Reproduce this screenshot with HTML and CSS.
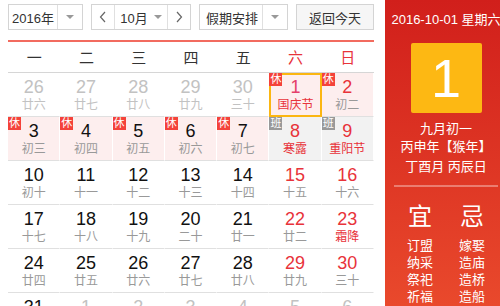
FILE: index.html
```html
<!DOCTYPE html>
<html lang="zh-CN">
<head>
    <meta charset="UTF-8">
    <meta name="viewport" content="width=device-width, initial-scale=1.0">
    <title>万年历</title>
    <link rel="stylesheet" href="styles.css">
</head>
<body>
    <div class="wrap">
        <div class="main">
            <div class="toolbar">
                <div class="select year">
                    <span class="val">2016年</span>
                    <span class="arrow"><i class="caret"></i></span>
                </div>
                <div class="select month">
                    <span class="nav"><svg width="8" height="12" viewBox="0 0 8 12"><polyline points="6,1 1.5,6 6,11" fill="none" stroke="#666" stroke-width="1.2"/></svg></span>
                    <span class="val">10月 <i class="caret"></i></span>
                    <span class="nav"><svg width="8" height="12" viewBox="0 0 8 12"><polyline points="2,1 6.5,6 2,11" fill="none" stroke="#666" stroke-width="1.2"/></svg></span>
                </div>
                <div class="select holiday">
                    <span class="val">假期安排</span>
                    <span class="arrow"><i class="caret"></i></span>
                </div>
                <button class="today-btn" type="button">返回今天</button>
            </div>

            <div class="weekdays">
                <span>一</span><span>二</span><span>三</span><span>四</span><span>五</span><span class="red">六</span><span class="red">日</span>
            </div>

            <div class="days" id="days"></div>
        </div>

        <div class="side">
            <div class="side-date">2016-10-01 星期六</div>
            <div class="big-day">1</div>
            <div class="lunar">
                <p>九月初一</p>
                <p>丙申年【猴年】</p>
                <p class="gz">丁酉月 丙辰日</p>
            </div>
            <div class="yiji">
                <div class="col">
                    <h3>宜</h3>
                    <p>订盟</p><p>纳采</p><p>祭祀</p><p>祈福</p><p>安香</p>
                </div>
                <div class="col">
                    <h3>忌</h3>
                    <p>嫁娶</p><p>造庙</p><p>造桥</p><p>造船</p><p>作灶</p>
                </div>
            </div>
        </div>
    </div>

    <script>
        // [day, lunar, flags]  o = other month, r = red number, f = festival, h = 休, b = 班, t = today
        const cells = [
            [26, '廿六', 'o'], [27, '廿七', 'o'], [28, '廿八', 'o'], [29, '廿九', 'o'], [30, '三十', 'o'], [1, '国庆节', 'rfht'], [2, '初二', 'rh'],
            [3, '初三', 'h'], [4, '初四', 'h'], [5, '初五', 'h'], [6, '初六', 'h'], [7, '初七', 'h'], [8, '寒露', 'rfb'], [9, '重阳节', 'rfb'],
            [10, '初十', ''], [11, '十一', ''], [12, '十二', ''], [13, '十三', ''], [14, '十四', ''], [15, '十五', 'r'], [16, '十六', 'r'],
            [17, '十七', ''], [18, '十八', ''], [19, '十九', ''], [20, '二十', ''], [21, '廿一', ''], [22, '廿二', 'r'], [23, '霜降', 'rf'],
            [24, '廿四', ''], [25, '廿五', ''], [26, '廿六', ''], [27, '廿七', ''], [28, '廿八', ''], [29, '廿九', 'r'], [30, '三十', 'r'],
            [31, '初一', ''], [1, '初二', 'o'], [2, '初三', 'o'], [3, '初四', 'o'], [4, '初五', 'o'], [5, '初六', 'o'], [6, '初七', 'o']
        ];

        const days = document.getElementById('days');

        cells.forEach(([num, lunar, flags]) => {
            const cell = document.createElement('div');
            cell.className = 'day';
            if (flags.includes('o')) cell.classList.add('other');
            if (flags.includes('r')) cell.classList.add('weekend');
            if (flags.includes('f')) cell.classList.add('fest');
            if (flags.includes('h')) cell.classList.add('rest');
            if (flags.includes('b')) cell.classList.add('work');
            if (flags.includes('t')) cell.classList.add('today');

            let html = '';
            if (flags.includes('h')) html += '<i class="tag">休</i>';
            if (flags.includes('b')) html += '<i class="tag">班</i>';
            html += `<b>${num}</b><span>${lunar}</span>`;
            cell.innerHTML = html;
            days.appendChild(cell);
        });
    </script>
</body>
</html>
```

FILE: styles.css
```css
body {
    margin: 0;
    overflow: hidden;
    font-family: 'Liberation Sans', Arial, 'Noto Sans CJK SC', sans-serif;
    background-color: #fff;
    color: #333;
}

.wrap {
    display: flex;
    width: 507px;
}

.main {
    width: 366px;
    padding: 0 11px 0 8px;
}

.toolbar {
    display: flex;
    gap: 8px;
    height: 40px;
    padding-top: 4px;
    box-sizing: border-box;
}

.select {
    display: flex;
    height: 26px;
    border: 1px solid #d4d4d4;
    box-sizing: border-box;
    font-size: 13px;
    color: #333;
    background-color: #fff;
}

.select .val {
    flex: 1;
    display: flex;
    align-items: center;
    justify-content: center;
    gap: 6px;
}

.select .arrow {
    width: 24px;
    border-left: 1px solid #e0e0e0;
    display: flex;
    align-items: center;
    justify-content: center;
}

.caret {
    display: inline-block;
    width: 0;
    height: 0;
    border-left: 4px solid transparent;
    border-right: 4px solid transparent;
    border-top: 4px solid #999;
}

.year {
    width: 75px;
}

.month {
    width: 100px;
}

.month .nav {
    width: 22px;
    display: flex;
    align-items: center;
    justify-content: center;
}

.month .nav:first-child {
    border-right: 1px solid #e0e0e0;
}

.month .nav:last-child {
    border-left: 1px solid #e0e0e0;
}

.holiday {
    width: 89px;
}

.holiday .val {
    padding-left: 2px;
}

.today-btn {
    width: 78px;
    height: 26px;
    border: 1px solid #d4d4d4;
    background-color: #f6f6f6;
    font-family: inherit;
    font-size: 13px;
    color: #333;
    padding: 0;
    cursor: pointer;
}

.weekdays {
    display: grid;
    grid-template-columns: repeat(7, 1fr);
    height: 30px;
    border-top: 2px solid #f26b5f;
    border-bottom: 1px solid #d6d6d6;
    font-size: 15px;
    line-height: 31px;
    text-align: center;
    color: #333;
}

.weekdays .red {
    color: #e8333a;
}

.days {
    display: grid;
    grid-template-columns: repeat(7, 1fr);
    grid-auto-rows: 44px;
}

.day {
    position: relative;
    box-sizing: border-box;
    border-bottom: 1px solid #e0e0e0;
    border-right: 1px solid #fff;
    text-align: center;
    padding-top: 4px;
}

.day b {
    display: block;
    font-weight: normal;
    font-size: 18px;
    line-height: 20px;
    color: #111;
}

.day span {
    display: block;
    font-size: 12px;
    line-height: 16px;
    color: #999;
}

.day.weekend b {
    color: #e8333a;
}

.day.fest span {
    color: #e8333a;
}

.day.other b,
.day.other span {
    color: #c2c2c2;
}

.day.rest {
    background-color: #fdeeee;
}

.day.work {
    background-color: #f2f2f2;
}

.day.today {
    border: 2px solid #fbb612;
    padding-top: 2px;
}

.day.today b {
    color: #e4406a;
}

.tag {
    position: absolute;
    top: 0;
    left: 0;
    width: 13px;
    height: 13px;
    font-style: normal;
    font-size: 11px;
    line-height: 13px;
    color: #fff;
    background-color: #f4423a;
}

.day.today .tag {
    top: -2px;
    left: -2px;
}

.day.work .tag {
    background-color: #999;
}

.side {
    width: 122px;
    height: 306px;
    background: linear-gradient(#d11f1b, #e9492c);
    color: #fff;
    text-align: center;
    overflow: hidden;
}

.side-date {
    font-size: 13px;
    line-height: 16px;
    padding-top: 12px;
}

.big-day {
    width: 71px;
    height: 70px;
    margin: 15px auto 0;
    background-color: #fdb813;
    border-radius: 2px;
    font-size: 54px;
    line-height: 70px;
}

.lunar p {
    margin: 0;
    font-size: 13px;
    line-height: 18px;
}

.lunar p:first-child {
    margin-top: 7px;
}

.lunar .gz {
    margin-top: 2px;
}

.yiji {
    display: flex;
    margin: 9px 9px 0;
    padding-top: 16px;
    border-top: 2px solid rgba(255, 255, 255, 0.35);
}

.yiji .col {
    flex: 1;
}

.yiji h3 {
    margin: 0 0 6px;
    font-size: 24px;
    line-height: 28px;
    font-weight: normal;
}

.yiji p {
    margin: 0;
    font-size: 13px;
    line-height: 17px;
}
```
